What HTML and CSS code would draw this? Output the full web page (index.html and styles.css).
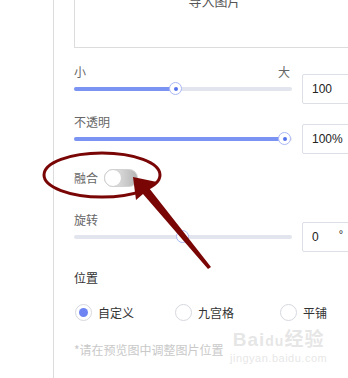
FILE: index.html
```html
<!DOCTYPE html>
<html lang="zh-CN">
<head>
    <meta charset="UTF-8">
    <meta name="viewport" content="width=device-width, initial-scale=1.0">
    <title>图片水印</title>
    <link rel="stylesheet" href="styles.css">
</head>
<body>
    <div class="page">
        <div class="gutter"></div>

        <div class="panel">
            <!-- Upload -->
            <div class="upload">导入图片</div>

            <!-- Size -->
            <div class="slider-block size-block">
                <div class="slider-col">
                    <div class="slider-label split"><span>小</span><span>大</span></div>
                    <div class="track-row">
                        <div class="track">
                            <div class="fill" style="width: 47%"></div>
                            <div class="thumb" style="left: 47%"></div>
                        </div>
                    </div>
                </div>
                <div class="num-input">100</div>
            </div>

            <!-- Opacity -->
            <div class="slider-block opacity-block">
                <div class="slider-col">
                    <div class="slider-label">不透明</div>
                    <div class="track-row">
                        <div class="track">
                            <div class="fill" style="width: 97%"></div>
                            <div class="thumb" style="left: 97%"></div>
                        </div>
                    </div>
                </div>
                <div class="num-input">100%</div>
            </div>

            <!-- Blend -->
            <div class="toggle-row">
                <span class="toggle-label">融合</span>
                <span class="toggle"><span class="knob"></span></span>
            </div>

            <!-- Rotate -->
            <div class="slider-block rotate-block">
                <div class="slider-col">
                    <div class="slider-label">旋转</div>
                    <div class="track-row">
                        <div class="track">
                            <div class="thumb plain" style="left: 50%"></div>
                        </div>
                    </div>
                </div>
                <div class="num-input degree"><span>0</span><span class="unit">°</span></div>
            </div>

            <!-- Position -->
            <div class="section-title">位置</div>
            <div class="radio-group">
                <label class="radio-item"><span class="radio checked"></span>自定义</label>
                <label class="radio-item"><span class="radio"></span>九宫格</label>
                <label class="radio-item"><span class="radio"></span>平铺</label>
            </div>
            <p class="hint">*请在预览图中调整图片位置</p>
        </div>
    </div>

    <!-- watermark -->
    <div class="watermark">
        <div class="wm-logo">Bai<span class="wm-du">du</span>经验</div>
        <div class="wm-url">jingyan.baidu.com</div>
    </div>

    <!-- annotation -->
    <svg class="annotation" width="348" height="378" viewBox="0 0 348 378">
        <ellipse cx="102" cy="175" rx="58" ry="22" fill="none" stroke="#7a0505" stroke-width="3"/>
        <polygon points="133,177 157,182 149,188 211,267 208,269 143,194 136,200" fill="#7a0505"/>
    </svg>
</body>
</html>
```

FILE: styles.css
```css
body {
    margin: 0;
    background: #fff;
    font-family: "Noto Sans CJK SC", "Liberation Sans", sans-serif;
    font-size: 12px;
    color: #666;
    overflow: hidden;
}

.page {
    display: flex;
    width: 348px;
    height: 378px;
    overflow: hidden;
}

.gutter {
    width: 53px;
    flex-shrink: 0;
    border-right: 1px solid #dcdcdc;
}

.panel {
    flex-shrink: 0;
    width: 300px;
    padding-left: 20px;
}

.upload {
    box-sizing: border-box;
    margin-top: -30px;
    height: 78px;
    padding-top: 22px;
    border: 1px solid #dcdcdc;
    border-right: none;
    text-align: center;
    padding-right: 20px;
    font-size: 13px;
    line-height: 16px;
    color: #555;
}

.slider-block {
    display: flex;
    align-items: flex-end;
}

.size-block {
    margin-top: 17px;
}

.opacity-block {
    margin-top: 11px;
}

.rotate-block {
    margin-top: 26px;
}

.slider-col {
    width: 218px;
    flex-shrink: 0;
}

.slider-label {
    line-height: 14px;
    height: 14px;
    color: #666;
}

.slider-label.split {
    display: flex;
    justify-content: space-between;
    padding-right: 2px;
}

.track-row {
    height: 30px;
    margin-top: -5px;
    display: flex;
    align-items: center;
}

.track {
    position: relative;
    width: 100%;
    height: 4px;
    border-radius: 2px;
    background: #e3e5ee;
}

.fill {
    height: 4px;
    border-radius: 2px;
    background: #7b93f2;
}

.thumb {
    position: absolute;
    top: 50%;
    width: 11px;
    height: 11px;
    margin: -7px 0 0 -7px;
    border: 1px solid #a9b7f6;
    border-radius: 50%;
    background: #fff;
}

.thumb::after {
    content: "";
    position: absolute;
    left: 4px;
    top: 4px;
    width: 4px;
    height: 4px;
    border-radius: 50%;
    background: #5673ee;
}

.thumb.plain::after {
    display: none;
}

.num-input {
    box-sizing: border-box;
    width: 60px;
    height: 30px;
    margin-left: 10px;
    padding-left: 9px;
    border: 1px solid #dcdfe6;
    border-radius: 2px;
    font-family: "Liberation Sans", sans-serif;
    font-size: 12px;
    line-height: 28px;
    color: #222;
}

.num-input.degree {
    display: flex;
}

.num-input .unit {
    margin-left: 20px;
    font-size: 11px;
    line-height: 22px;
}

.toggle-row {
    display: flex;
    align-items: center;
    height: 18px;
    margin-top: 15px;
}

.toggle-label {
    line-height: 18px;
    color: #666;
}

.toggle {
    position: relative;
    box-sizing: border-box;
    width: 34px;
    height: 18px;
    margin-left: 6px;
    border: 1px solid #d2d2d2;
    border-radius: 9px;
    background: linear-gradient(to right, #f4f4f4, #b5b5b5);
}

.knob {
    position: absolute;
    left: -1px;
    top: -1px;
    box-sizing: border-box;
    width: 18px;
    height: 18px;
    border: 1px solid #cfcfcf;
    border-radius: 50%;
    background: #fff;
}

.section-title {
    margin-top: 19px;
    line-height: 14px;
    color: #333;
}

.radio-group {
    display: grid;
    grid-template-columns: 100px 105px auto;
    margin-top: 19px;
    height: 16px;
}

.radio-item {
    display: flex;
    align-items: center;
    color: #333;
    line-height: 16px;
}

.radio {
    position: relative;
    box-sizing: border-box;
    width: 17px;
    height: 17px;
    margin: 0 6px 0 1px;
    border: 1px solid #d6d8de;
    border-radius: 50%;
    background: #fff;
}

.radio.checked::after {
    content: "";
    position: absolute;
    left: 3px;
    top: 3px;
    width: 9px;
    height: 9px;
    border-radius: 50%;
    background: #6d84f2;
}

.hint {
    margin: 23px 0 0;
    line-height: 14px;
    color: #c9c9c9;
}

.watermark {
    position: absolute;
    left: 230px;
    top: 330px;
    color: rgba(205, 205, 205, 0.5);
    font-family: "Liberation Sans", "Noto Sans CJK SC", sans-serif;
    text-align: center;
}

.wm-logo {
    font-size: 19px;
    font-weight: bold;
    line-height: 20px;
    letter-spacing: 1px;
}

.wm-du {
    font-size: 14px;
}

.wm-url {
    font-size: 11px;
    line-height: 14px;
    letter-spacing: 0.5px;
}

.annotation {
    position: absolute;
    left: 0;
    top: 0;
    pointer-events: none;
}
```
